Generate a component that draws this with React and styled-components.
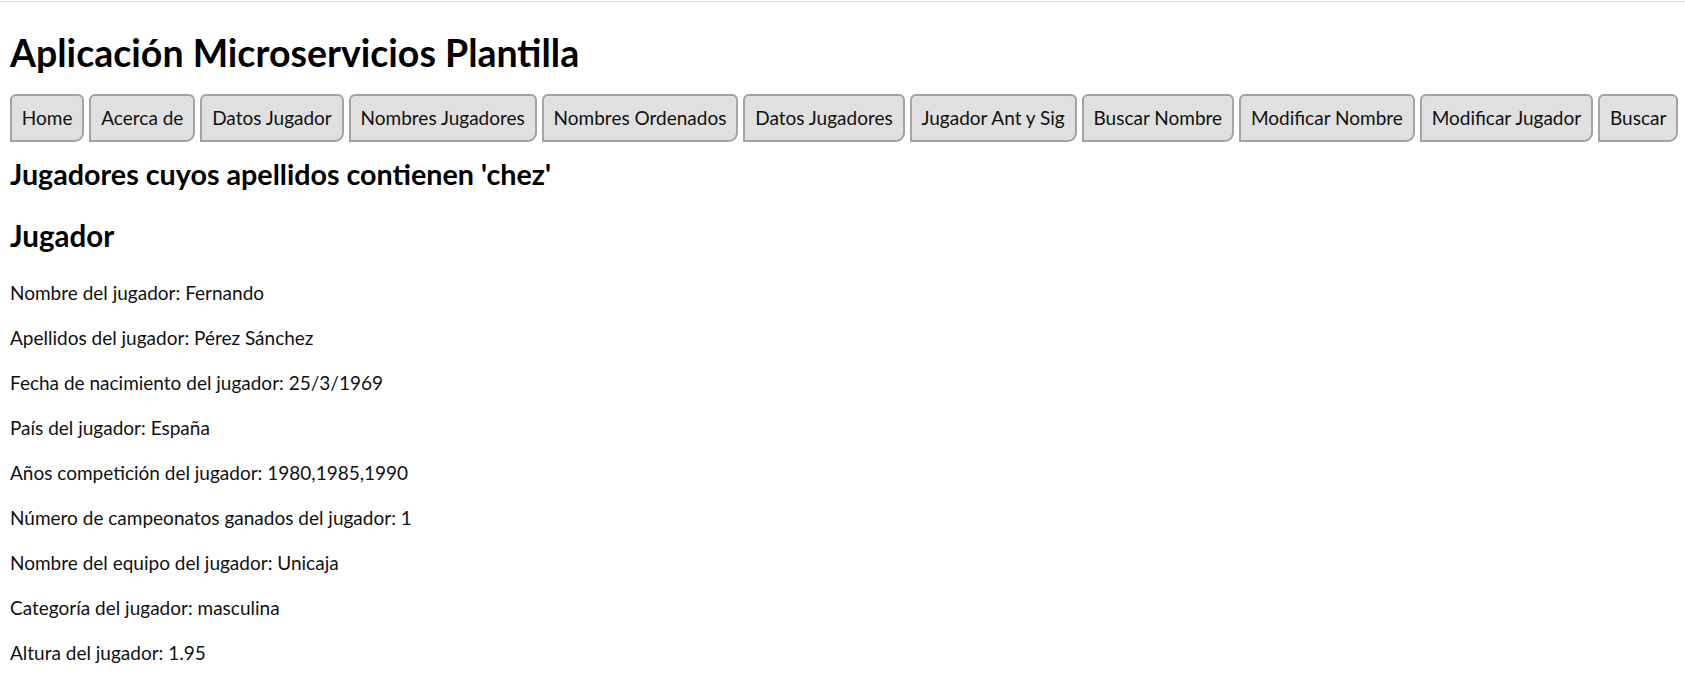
import React from 'react';
import styled, { createGlobalStyle } from 'styled-components';

const GlobalStyle = createGlobalStyle`
  body {
    margin: 0;
    background: #fff;
    color: #111;
    font-family: Lato, "Liberation Sans", sans-serif;
  }
`;

const Page = styled.div`
  border-top: 1px solid #dcdcdc;
  margin-top: 1px;
  padding: 0 10px;
`;

const Title = styled.h1`
  margin: 28px 0 0;
  font-size: 37.5px;
  font-weight: 700;
  line-height: 1.2;
  color: #000;
`;

const Nav = styled.nav`
  display: flex;
  gap: 5px;
  margin-top: 19px;
`;

const NavButton = styled.button`
  font-family: inherit;
  font-size: 19px;
  line-height: 28px;
  padding: 8px 10px 8px 9.8px;
  color: #111;
  background: #e0e0e0;
  border: 2px solid #a3a3a3;
  border-radius: 6px 6px 9px 0;
  white-space: nowrap;
  cursor: pointer;
`;

const Subtitle = styled.h2`
  margin: 15px 0 0;
  font-size: 28.7px;
  font-weight: 700;
  line-height: 1.2;
  color: #000;
`;

const CardTitle = styled.h3`
  margin: 27px 0 0;
  font-size: 29.5px;
  font-weight: 700;
  line-height: 1.2;
  color: #000;
`;

const Fields = styled.div`
  display: flex;
  flex-direction: column;
  gap: 18px;
  margin-top: 25px;
`;

const Field = styled.p`
  margin: 0;
  font-size: 19px;
  line-height: 27px;
`;

const links = [
  'Home',
  'Acerca de',
  'Datos Jugador',
  'Nombres Jugadores',
  'Nombres Ordenados',
  'Datos Jugadores',
  'Jugador Ant y Sig',
  'Buscar Nombre',
  'Modificar Nombre',
  'Modificar Jugador',
  'Buscar',
];

const jugador = [
  ['Nombre del jugador', 'Fernando'],
  ['Apellidos del jugador', 'Pérez Sánchez'],
  ['Fecha de nacimiento del jugador', '25/3/1969'],
  ['País del jugador', 'España'],
  ['Años competición del jugador', '1980,1985,1990'],
  ['Número de campeonatos ganados del jugador', '1'],
  ['Nombre del equipo del jugador', 'Unicaja'],
  ['Categoría del jugador', 'masculina'],
  ['Altura del jugador', '1.95'],
];

export default function App() {
  return (
    <Page>
      <GlobalStyle />
      <Title>Aplicación Microservicios Plantilla</Title>
      <Nav>
        {links.map(l => (
          <NavButton key={l}>{l}</NavButton>
        ))}
      </Nav>
      <Subtitle>Jugadores cuyos apellidos contienen 'chez'</Subtitle>
      <CardTitle>Jugador</CardTitle>
      <Fields>
        {jugador.map(([k, v]) => (
          <Field key={k}>{k}: {v}</Field>
        ))}
      </Fields>
    </Page>
  );
}
